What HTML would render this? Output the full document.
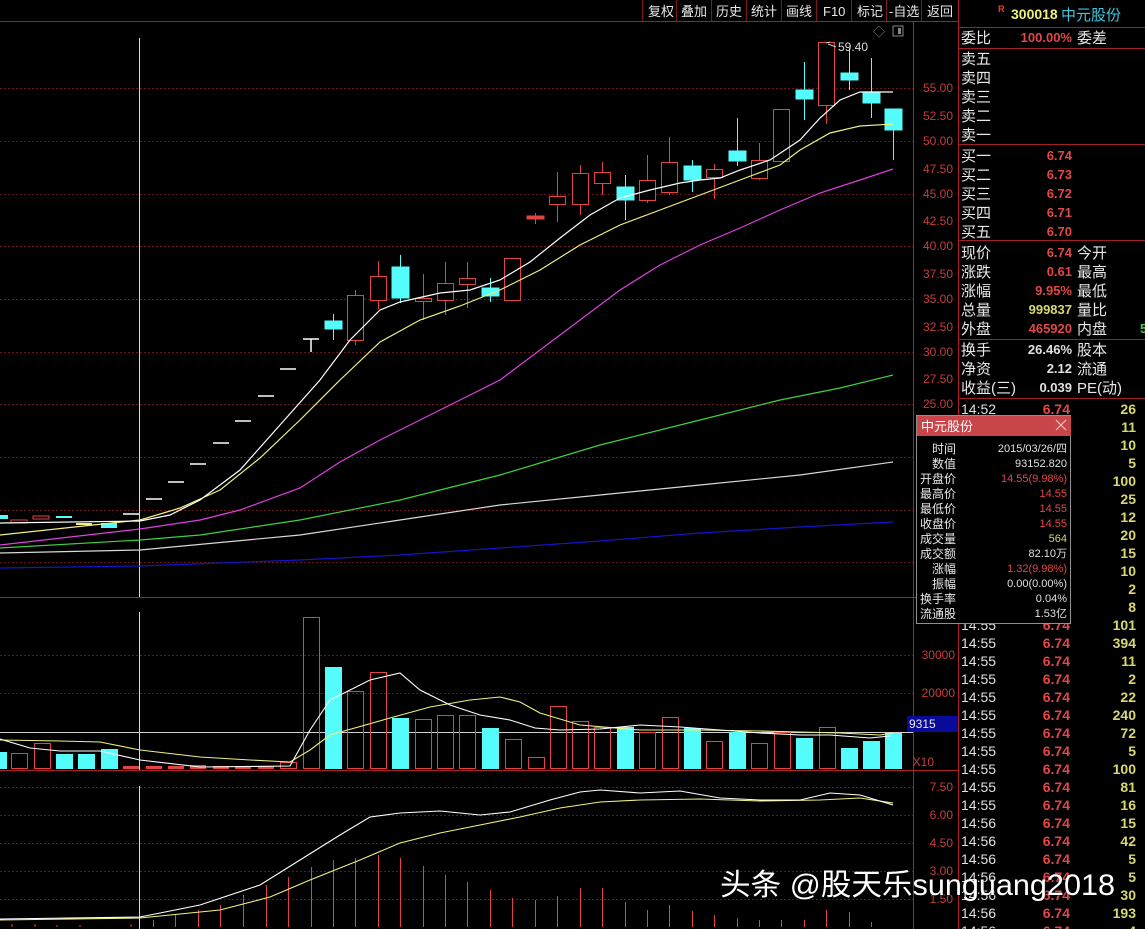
<!DOCTYPE html>
<html><head><meta charset="utf-8">
<style>
html,body{margin:0;padding:0;background:#000;}
body{width:1145px;height:929px;overflow:hidden;}
svg{display:block;font-family:"Liberation Sans","WenQuanYi Zen Hei","Noto Sans CJK SC",sans-serif;}
</style></head><body>
<svg width="1145" height="929" viewBox="0 0 1145 929" xmlns="http://www.w3.org/2000/svg">
<rect width="1145" height="929" fill="#000"/>
<!-- toolbar -->
<g font-size="13" fill="#e8e8e8">
<line x1="0" y1="21.5" x2="958" y2="21.5" stroke="#a02020"/>
<g stroke="#801818"><line x1="642.5" y1="0" x2="642.5" y2="21"/><line x1="676.5" y1="0" x2="676.5" y2="21"/><line x1="711.5" y1="0" x2="711.5" y2="21"/><line x1="746.5" y1="0" x2="746.5" y2="21"/><line x1="781.5" y1="0" x2="781.5" y2="21"/><line x1="816.5" y1="0" x2="816.5" y2="21"/><line x1="851.5" y1="0" x2="851.5" y2="21"/><line x1="886.5" y1="0" x2="886.5" y2="21"/><line x1="921.5" y1="0" x2="921.5" y2="21"/></g>
<text x="648" y="16">复权</text><text x="681" y="16">叠加</text><text x="716" y="16">历史</text><text x="751" y="16">统计</text><text x="786" y="16">画线</text><text x="823" y="16">F10</text><text x="857" y="16">标记</text><text x="889" y="16">-自选</text><text x="927" y="16">返回</text>
</g>
<text x="873" y="36" font-size="12" fill="#888">◇</text>
<rect x="893" y="26" width="10" height="10" fill="none" stroke="#888"/><rect x="898" y="28" width="3" height="6" fill="#888"/>
<!-- panel borders -->
<g stroke="#b02020"><line x1="913.5" y1="22" x2="913.5" y2="929"/><line x1="958.5" y1="0" x2="958.5" y2="929"/><line x1="0" y1="597.5" x2="958" y2="597.5"/><line x1="0" y1="770.5" x2="958" y2="770.5"/></g>
<!-- price grid -->
<g stroke="#6a1414" stroke-dasharray="2,2">
<line x1="0" y1="88.5" x2="913" y2="88.5"/><line x1="0" y1="141.5" x2="913" y2="141.5"/><line x1="0" y1="194.5" x2="913" y2="194.5"/><line x1="0" y1="246.5" x2="913" y2="246.5"/><line x1="0" y1="299.5" x2="913" y2="299.5"/><line x1="0" y1="352.5" x2="913" y2="352.5"/><line x1="0" y1="404.5" x2="913" y2="404.5"/><line x1="0" y1="457.5" x2="913" y2="457.5"/><line x1="0" y1="510.5" x2="913" y2="510.5"/><line x1="0" y1="562.5" x2="913" y2="562.5"/>
<line x1="0" y1="655.5" x2="913" y2="655.5"/><line x1="0" y1="693.5" x2="913" y2="693.5"/>
<line x1="0" y1="787.5" x2="913" y2="787.5"/><line x1="0" y1="815.5" x2="913" y2="815.5"/><line x1="0" y1="843.5" x2="913" y2="843.5"/><line x1="0" y1="871.5" x2="913" y2="871.5"/><line x1="0" y1="899.5" x2="913" y2="899.5"/>
</g>
<g font-size="12" fill="#c83c3c" text-anchor="end">
<text x="953" y="92">55.00</text><text x="953" y="120">52.50</text><text x="953" y="145">50.00</text><text x="953" y="173">47.50</text><text x="953" y="198">45.00</text><text x="953" y="225">42.50</text><text x="953" y="250">40.00</text><text x="953" y="278">37.50</text><text x="953" y="303">35.00</text><text x="953" y="331">32.50</text><text x="953" y="356">30.00</text><text x="953" y="383">27.50</text><text x="953" y="408">25.00</text>
<text x="955" y="659">30000</text><text x="955" y="697">20000</text><text x="934" y="766">X10</text>
<text x="953" y="791">7.50</text><text x="953" y="819">6.00</text><text x="953" y="847">4.50</text><text x="953" y="875">3.00</text><text x="953" y="903">1.50</text>
</g>
<rect x="907" y="716" width="51" height="16" fill="#0a0a9a"/>
<text x="909" y="728" font-size="12" fill="#e8e8e8">9315</text>
<!-- crosshair -->
<g stroke="#d8d8d8"><line x1="139.5" y1="38" x2="139.5" y2="597"/><line x1="139.5" y1="612" x2="139.5" y2="770"/><line x1="139.5" y1="786" x2="139.5" y2="929"/></g>
<line x1="0" y1="732.5" x2="913" y2="732.5" stroke="#d0d0d0"/>
<!-- early small candles -->
<rect x="0" y="515" width="8" height="4" fill="#54fcfc"/><rect x="11" y="520" width="16" height="3" fill="none" stroke="#e04444"/><rect x="33" y="516" width="16" height="3" fill="none" stroke="#e04444"/><rect x="56" y="516" width="16" height="2" fill="#54fcfc"/><rect x="76" y="523" width="16" height="2" fill="#f0f080"/><rect x="101" y="523" width="16" height="5" fill="#54fcfc"/>
<!-- limit-up dashes -->
<g stroke="#fff" stroke-width="1.5">
<line x1="123" y1="514" x2="139" y2="514"/><line x1="146" y1="499" x2="162" y2="499"/><line x1="168" y1="482" x2="184" y2="482"/><line x1="190" y1="464" x2="206" y2="464"/><line x1="213" y1="443" x2="229" y2="443"/><line x1="235" y1="421" x2="251" y2="421"/><line x1="258" y1="396" x2="274" y2="396"/><line x1="280" y1="369" x2="296" y2="369"/><line x1="303" y1="339" x2="319" y2="339"/><line x1="311" y1="339" x2="311" y2="352"/>
</g>
<!-- candles -->
<g stroke="#e04444" fill="none">
<line x1="355.5" y1="290" x2="355.5" y2="345" stroke="#e04444"/><rect x="347.5" y="295.5" width="16" height="45" fill="#000" stroke="#e04444"/>
<line x1="378.5" y1="261" x2="378.5" y2="309"/><rect x="370.5" y="276.5" width="16" height="24" fill="#000" stroke="#e04444"/>
<line x1="423.5" y1="274" x2="423.5" y2="320"/><rect x="415.5" y="298.5" width="16" height="3" fill="#000" stroke="#e04444"/>
<line x1="445.5" y1="262" x2="445.5" y2="315"/><rect x="437.5" y="283.5" width="16" height="17" fill="#000" stroke="#e04444"/>
<line x1="467.5" y1="262" x2="467.5" y2="308"/><rect x="459.5" y="278.5" width="16" height="6" fill="#000" stroke="#e04444"/>
<rect x="504.5" y="258.5" width="16" height="42" fill="#000" stroke="#e04444"/>
<line x1="535.5" y1="213" x2="535.5" y2="224"/><rect x="527" y="216" width="17" height="3" fill="#e04444"/>
<line x1="557.5" y1="172" x2="557.5" y2="222"/><rect x="549.5" y="196.5" width="16" height="8" fill="#000" stroke="#e04444"/>
<line x1="580.5" y1="165" x2="580.5" y2="215"/><rect x="572.5" y="173.5" width="16" height="31" fill="#000" stroke="#e04444"/>
<line x1="602.5" y1="162" x2="602.5" y2="195"/><rect x="594.5" y="172.5" width="16" height="11" fill="#000" stroke="#e04444"/>
<line x1="647.5" y1="155" x2="647.5" y2="203"/><rect x="639.5" y="180.5" width="16" height="20" fill="#000" stroke="#e04444"/>
<line x1="669.5" y1="137" x2="669.5" y2="195"/><rect x="661.5" y="162.5" width="16" height="30" fill="#000" stroke="#e04444"/>
<line x1="714.5" y1="164" x2="714.5" y2="199"/><rect x="706.5" y="169.5" width="16" height="8" fill="#000" stroke="#e04444"/>
<line x1="759.5" y1="143" x2="759.5" y2="180"/><rect x="751.5" y="160.5" width="16" height="18" fill="#000" stroke="#e04444"/>
<rect x="773.5" y="109.5" width="16" height="52" fill="#000" stroke="#e04444"/>
<line x1="826.5" y1="105" x2="826.5" y2="124"/><rect x="818.5" y="42.5" width="16" height="63" fill="#000" stroke="#e04444"/>
</g>
<g stroke="#54fcfc" fill="#54fcfc">
<line x1="333.5" y1="314" x2="333.5" y2="340"/><rect x="325" y="321" width="17" height="8"/>
<line x1="400.5" y1="255" x2="400.5" y2="303"/><rect x="392" y="267" width="17" height="31"/>
<line x1="490.5" y1="278" x2="490.5" y2="302"/><rect x="482" y="288" width="17" height="8"/>
<line x1="625.5" y1="175" x2="625.5" y2="220"/><rect x="617" y="187" width="17" height="13"/>
<line x1="692.5" y1="160" x2="692.5" y2="192"/><rect x="684" y="166" width="17" height="14"/>
<line x1="737.5" y1="118" x2="737.5" y2="166"/><rect x="729" y="151" width="17" height="10"/>
<line x1="804.5" y1="62" x2="804.5" y2="120"/><rect x="796" y="90" width="17" height="9"/>
<line x1="849.5" y1="48" x2="849.5" y2="90"/><rect x="841" y="73" width="17" height="7"/>
<line x1="871.5" y1="58" x2="871.5" y2="118"/><rect x="863" y="93" width="17" height="10"/>
<line x1="893.5" y1="130" x2="893.5" y2="160"/><rect x="885" y="109" width="17" height="21"/>
</g>
<!-- MAs -->
<g fill="none" stroke-width="1.2">
<polyline stroke="#1515c8" points="0,568 140,566 300,560 400,555 500,548 600,541 700,533 800,527 893,522"/>
<polyline stroke="#d8d8d8" points="0,553 140,550 300,535 400,520 500,505 600,495 700,485 800,475 893,462"/>
<polyline stroke="#40d040" points="0,548 140,540 200,535 300,520 400,500 500,475 600,445 700,420 780,400 840,388 893,375"/>
<polyline stroke="#e040e0" points="0,545 140,529 200,520 240,510 300,488 340,462 380,440 420,420 460,400 500,380 540,350 580,320 620,290 660,265 700,245 740,228 780,210 820,193 860,180 893,169"/>
<polyline stroke="#f0f080" points="0,535 140,520 180,508 220,490 260,458 300,420 340,380 380,342 420,320 460,306 500,290 540,270 580,245 620,225 660,210 700,195 740,180 780,165 800,150 830,133 860,126 893,124"/>
<polyline stroke="#fff" points="0,523 140,521 170,515 200,500 240,470 280,425 320,380 350,340 380,310 400,302 440,293 470,290 500,280 530,262 560,238 590,215 620,198 650,190 680,183 700,180 720,178 740,170 770,160 800,140 820,118 840,100 860,92 893,92"/>
</g>
<path d="M826 43 L830 42 M828 44 L836 47" stroke="#ccc" fill="none"/>
<text x="838" y="51" font-size="12" fill="#ddd">59.40</text>
<!-- volume bars -->
<g fill="#54fcfc">
<rect x="0" y="752" width="7" height="17"/><rect x="56" y="754" width="17" height="15"/><rect x="78" y="754" width="17" height="15"/><rect x="101" y="749" width="17" height="20"/>
<rect x="325" y="667" width="17" height="102"/><rect x="392" y="718" width="17" height="51"/><rect x="482" y="728" width="17" height="41"/><rect x="617" y="727" width="17" height="42"/><rect x="684" y="728" width="17" height="41"/><rect x="729" y="732" width="17" height="37"/><rect x="796" y="738" width="17" height="31"/><rect x="841" y="748" width="17" height="21"/><rect x="863" y="741" width="17" height="28"/><rect x="885" y="733" width="17" height="36"/>
</g>
<g fill="none" stroke="#e04444">
<rect x="11.5" y="753.5" width="16" height="15"/><rect x="34.5" y="743.5" width="16" height="25"/>
<rect x="303.5" y="617.5" width="16" height="151"/><rect x="347.5" y="691.5" width="16" height="77"/><rect x="370.5" y="672.5" width="16" height="96"/><rect x="415.5" y="719.5" width="16" height="49"/><rect x="437.5" y="715.5" width="16" height="53"/><rect x="459.5" y="715.5" width="16" height="53"/><rect x="505.5" y="739.5" width="16" height="29"/><rect x="528.5" y="757.5" width="16" height="11"/><rect x="550.5" y="706.5" width="16" height="62"/><rect x="572.5" y="721.5" width="16" height="47"/><rect x="594.5" y="727.5" width="16" height="41"/><rect x="639.5" y="732.5" width="16" height="36"/><rect x="662.5" y="717.5" width="16" height="51"/><rect x="706.5" y="741.5" width="16" height="27"/><rect x="751.5" y="743.5" width="16" height="25"/><rect x="774.5" y="732.5" width="16" height="36"/><rect x="819.5" y="727.5" width="16" height="41"/>
<rect x="280.5" y="762.5" width="16" height="6"/>
</g>
<g fill="#e04444"><rect x="123" y="766" width="16" height="3"/><rect x="146" y="766" width="16" height="3"/><rect x="168" y="766" width="16" height="3"/><rect x="190" y="765" width="16" height="4"/><rect x="213" y="766" width="16" height="3"/><rect x="235" y="766" width="16" height="3"/><rect x="258" y="766" width="16" height="3"/></g>
<g fill="none" stroke-width="1.1">
<polyline stroke="#f0f080" points="0,740 60,741 100,742 140,750 200,757 250,760 290,762 310,750 330,735 390,718 430,707 470,700 500,697 520,702 540,713 580,725 640,730 700,730 760,731 800,732 840,733 880,735 893,733"/>
<polyline stroke="#fff" points="0,739 30,748 60,751 100,751 140,760 200,767 290,766 310,730 330,700 370,680 400,673 420,690 450,705 480,715 510,720 535,728 560,730 600,729 640,725 680,727 720,730 760,733 800,735 830,735 870,738 890,736"/>
</g>
<!-- MACD histogram -->
<g stroke="#e04444">
<line x1="12" y1="927" x2="12" y2="924"/><line x1="35" y1="927" x2="35" y2="924"/><line x1="57" y1="927" x2="57" y2="925"/><line x1="80" y1="927" x2="80" y2="925"/><line x1="131" y1="927" x2="131" y2="924"/>
<line x1="153.5" y1="927" x2="153.5" y2="920"/><line x1="175.5" y1="927" x2="175.5" y2="915"/><line x1="198.5" y1="927" x2="198.5" y2="910"/><line x1="220.5" y1="927" x2="220.5" y2="905"/><line x1="243.5" y1="927" x2="243.5" y2="895"/><line x1="266.5" y1="927" x2="266.5" y2="885"/><line x1="288.5" y1="927" x2="288.5" y2="877"/><line x1="311.5" y1="927" x2="311.5" y2="867"/><line x1="333.5" y1="927" x2="333.5" y2="860"/><line x1="355.5" y1="927" x2="355.5" y2="858"/><line x1="378.5" y1="927" x2="378.5" y2="855"/><line x1="400.5" y1="927" x2="400.5" y2="858"/><line x1="423.5" y1="927" x2="423.5" y2="866"/><line x1="445.5" y1="927" x2="445.5" y2="875"/><line x1="467.5" y1="927" x2="467.5" y2="882"/><line x1="490.5" y1="927" x2="490.5" y2="890"/><line x1="512.5" y1="927" x2="512.5" y2="898"/><line x1="535.5" y1="927" x2="535.5" y2="900"/><line x1="557.5" y1="927" x2="557.5" y2="896"/><line x1="580.5" y1="927" x2="580.5" y2="888"/><line x1="602.5" y1="927" x2="602.5" y2="888"/><line x1="625.5" y1="927" x2="625.5" y2="902"/><line x1="647.5" y1="927" x2="647.5" y2="910"/><line x1="669.5" y1="927" x2="669.5" y2="905"/><line x1="692.5" y1="927" x2="692.5" y2="911"/><line x1="714.5" y1="927" x2="714.5" y2="915"/><line x1="737.5" y1="927" x2="737.5" y2="918"/><line x1="759.5" y1="927" x2="759.5" y2="920"/><line x1="781.5" y1="927" x2="781.5" y2="920"/><line x1="804.5" y1="927" x2="804.5" y2="920"/><line x1="826.5" y1="927" x2="826.5" y2="910"/><line x1="849.5" y1="927" x2="849.5" y2="912"/><line x1="871.5" y1="927" x2="871.5" y2="922"/>
</g>
<g fill="none" stroke-width="1.1">
<polyline stroke="#f0f080" points="0,920 140,918 220,910 270,897 310,880 360,860 400,843 440,833 480,825 520,817 560,808 600,802 640,800 700,799 760,801 820,800 860,798 893,803"/>
<polyline stroke="#fff" points="0,919 140,917 200,905 260,885 300,860 340,835 370,817 400,813 440,811 480,815 510,812 550,800 580,792 600,790 640,793 680,791 720,798 760,800 800,800 830,793 860,795 893,805"/>
</g>
<!-- right panel -->
<g stroke="#a02020"><line x1="959" y1="27.5" x2="1145" y2="27.5"/><line x1="959" y1="48.5" x2="1145" y2="48.5"/><line x1="959" y1="144.5" x2="1145" y2="144.5"/><line x1="959" y1="240.5" x2="1145" y2="240.5"/><line x1="959" y1="339.5" x2="1145" y2="339.5"/><line x1="959" y1="398.5" x2="1145" y2="398.5"/></g>
<text x="998" y="12" font-size="9" fill="#e04040" font-weight="bold">R</text>
<text x="1011" y="19" font-size="14" fill="#f0f080" font-weight="bold">300018</text>
<text x="1061" y="20" font-size="15" fill="#40c8e0">中元股份</text>
<g font-size="15" fill="#e8e8e8">
<text x="961" y="43">委比</text><text x="1077" y="43">委差</text>
<text x="961" y="64">卖五</text><text x="961" y="83">卖四</text><text x="961" y="102">卖三</text><text x="961" y="121">卖二</text><text x="961" y="140">卖一</text>
<text x="961" y="161">买一</text><text x="961" y="180">买二</text><text x="961" y="199">买三</text><text x="961" y="218">买四</text><text x="961" y="237">买五</text>
<text x="961" y="258">现价</text><text x="961" y="277">涨跌</text><text x="961" y="296">涨幅</text><text x="961" y="315">总量</text><text x="961" y="334">外盘</text>
<text x="1077" y="258">今开</text><text x="1077" y="277">最高</text><text x="1077" y="296">最低</text><text x="1077" y="315">量比</text><text x="1077" y="334">内盘</text>
<text x="961" y="355">换手</text><text x="961" y="374">净资</text><text x="961" y="393">收益(三)</text>
<text x="1077" y="355">股本</text><text x="1077" y="374">流通</text><text x="1077" y="393">PE(动)</text>
</g>
<g font-size="13" font-weight="bold" text-anchor="end" fill="#e04848">
<text x="1072" y="42">100.00%</text>
<text x="1072" y="160">6.74</text><text x="1072" y="179">6.73</text><text x="1072" y="198">6.72</text><text x="1072" y="217">6.71</text><text x="1072" y="236">6.70</text>
<text x="1072" y="257">6.74</text><text x="1072" y="276">0.61</text><text x="1072" y="295">9.95%</text><text x="1072" y="333">465920</text>
<text x="1072" y="314" fill="#d8d870">999837</text>
<text x="1072" y="354" fill="#e0e0e0">26.46%</text><text x="1072" y="373" fill="#e0e0e0">2.12</text><text x="1072" y="392" fill="#e0e0e0">0.039</text>
</g>
<text x="1140" y="333" font-size="13" fill="#40d040" font-weight="bold">5</text>
<!-- ticks -->
<g font-size="14" fill="#e0e0e0">
<text x="961" y="414">14:52</text>
<text x="961" y="630">14:55</text><text x="961" y="648">14:55</text><text x="961" y="666">14:55</text><text x="961" y="684">14:55</text><text x="961" y="702">14:55</text><text x="961" y="720">14:55</text><text x="961" y="738">14:55</text><text x="961" y="756">14:55</text><text x="961" y="774">14:55</text><text x="961" y="792">14:55</text><text x="961" y="810">14:55</text><text x="961" y="828">14:56</text><text x="961" y="846">14:56</text><text x="961" y="864">14:56</text><text x="961" y="882">14:56</text><text x="961" y="900">14:56</text><text x="961" y="918">14:56</text><text x="961" y="936">14:56</text>
</g>
<g font-size="14" font-weight="bold" fill="#e04848" text-anchor="end">
<text x="1070" y="414">6.74</text>
<text x="1070" y="630">6.74</text><text x="1070" y="648">6.74</text><text x="1070" y="666">6.74</text><text x="1070" y="684">6.74</text><text x="1070" y="702">6.74</text><text x="1070" y="720">6.74</text><text x="1070" y="738">6.74</text><text x="1070" y="756">6.74</text><text x="1070" y="774">6.74</text><text x="1070" y="792">6.74</text><text x="1070" y="810">6.74</text><text x="1070" y="828">6.74</text><text x="1070" y="846">6.74</text><text x="1070" y="864">6.74</text><text x="1070" y="882">6.74</text><text x="1070" y="900">6.74</text><text x="1070" y="918">6.74</text><text x="1070" y="936">6.74</text>
</g>
<rect x="959" y="417" width="112" height="3" fill="#c04848"/>
<g font-size="14" font-weight="bold" fill="#d8d870" text-anchor="end">
<text x="1136" y="414">26</text><text x="1136" y="432">11</text><text x="1136" y="450">10</text><text x="1136" y="468">5</text><text x="1136" y="486">100</text><text x="1136" y="504">25</text><text x="1136" y="522">12</text><text x="1136" y="540">20</text><text x="1136" y="558">15</text><text x="1136" y="576">10</text><text x="1136" y="594">2</text><text x="1136" y="612">8</text><text x="1136" y="630">101</text><text x="1136" y="648">394</text><text x="1136" y="666">11</text><text x="1136" y="684">2</text><text x="1136" y="702">22</text><text x="1136" y="720">240</text><text x="1136" y="738">72</text><text x="1136" y="756">5</text><text x="1136" y="774">100</text><text x="1136" y="792">81</text><text x="1136" y="810">16</text><text x="1136" y="828">15</text><text x="1136" y="846">42</text><text x="1136" y="864">5</text><text x="1136" y="882">5</text><text x="1136" y="900">30</text><text x="1136" y="918">193</text><text x="1136" y="936">4</text>
</g>
<!-- popup -->
<rect x="916.5" y="415.5" width="154" height="208" fill="#000" stroke="#909090"/>
<rect x="917" y="416" width="154" height="20" fill="#c8464a"/>
<text x="921" y="431" font-size="13" fill="#fff">中元股份</text>
<path d="M1056 420 L1066 430 M1066 420 L1056 430" stroke="#f0c0c0" stroke-width="1.2"/>
<g font-size="12" fill="#e8e8e8" text-anchor="end">
<text x="956" y="453">时间</text><text x="956" y="468">数值</text><text x="956" y="483">开盘价</text><text x="956" y="498">最高价</text><text x="956" y="513">最低价</text><text x="956" y="528">收盘价</text><text x="956" y="543">成交量</text><text x="956" y="558">成交额</text><text x="956" y="573">涨幅</text><text x="956" y="588">振幅</text><text x="956" y="603">换手率</text><text x="956" y="618">流通股</text>
</g>
<g font-size="11" text-anchor="end" fill="#e0e0e0">
<text x="1067" y="452">2015/03/26/四</text><text x="1067" y="467">93152.820</text>
<text x="1067" y="482" fill="#e04848">14.55(9.98%)</text><text x="1067" y="497" fill="#e04848">14.55</text><text x="1067" y="512" fill="#e04848">14.55</text><text x="1067" y="527" fill="#e04848">14.55</text>
<text x="1067" y="542" fill="#d8d870">564</text><text x="1067" y="557">82.10万</text>
<text x="1067" y="572" fill="#e04848">1.32(9.98%)</text><text x="1067" y="587">0.00(0.00%)</text><text x="1067" y="602">0.04%</text><text x="1067" y="617">1.53亿</text>
</g>
<!-- watermark -->
<text x="721" y="896" font-size="30" fill="#000" opacity="0.5" textLength="395" lengthAdjust="spacingAndGlyphs">头条 @股天乐sunguang2018</text>
<text x="720" y="895" font-size="30" fill="#fff" textLength="395" lengthAdjust="spacingAndGlyphs">头条 @股天乐sunguang2018</text>
</svg>
</body></html>
